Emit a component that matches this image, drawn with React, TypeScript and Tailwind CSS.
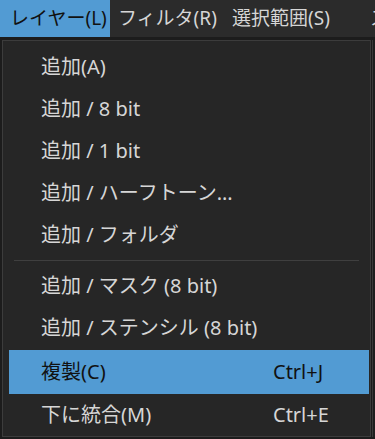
const font = { fontFamily: '"Noto Sans", "Noto Sans CJK JP", sans-serif' };

const groupA = ["追加(A)", "追加 / 8 bit", "追加 / 1 bit", "追加 / ハーフトーン...", "追加 / フォルダ"];
const groupB = ["追加 / マスク (8 bit)", "追加 / ステンシル (8 bit)"];

function Item({ label, shortcut, active }: { label: string; shortcut?: string; active?: boolean }) {
  return (
    <div
      className={
        active
          ? "ml-[6px] mr-[1px] flex h-[44px] items-center whitespace-nowrap bg-[#529bd3] pl-[32px] text-[#111111]"
          : "flex h-[42px] items-center whitespace-nowrap pl-[38px] text-[#d6d6d6]"
      }
    >
      <span className="w-[232px] shrink-0">{label}</span>
      {shortcut && <span>{shortcut}</span>}
    </div>
  );
}

export default function App() {
  return (
    <div className="relative h-[439px] w-[375px] overflow-hidden bg-[#1c1c1c] text-[20px] leading-none" style={font}>
      <div className="flex h-[37px] items-stretch overflow-hidden whitespace-nowrap bg-[#2b2b2b] text-[19px] text-[#d6d6d6]">
        <div className="flex w-[110px] shrink-0 items-center bg-[#529bd3] pl-[10px] text-[#111111]">レイヤー(L)</div>
        <div className="flex w-[122px] shrink-0 items-center pl-[8px]">フィルタ(R)</div>
        <div className="flex w-[138px] shrink-0 items-center">選択範囲(S)</div>
        <div className="flex shrink-0 items-center">ス</div>
      </div>
      <div className="flex">
        <div className="ml-[2px] mt-[3px] w-[369px] shrink-0 border border-[#3c3c3c] bg-[#262626] pt-[5px]">
          {groupA.map((t) => (
            <Item key={t} label={t} />
          ))}
          <div className="flex h-[9px] items-center px-[11px]">
            <div className="h-px w-full bg-[#3f3f3f]" />
          </div>
          {groupB.map((t) => (
            <Item key={t} label={t} />
          ))}
          <div className="h-px" />
          <Item label="複製(C)" shortcut="Ctrl+J" active />
          <Item label="下に統合(M)" shortcut="Ctrl+E" />
        </div>
        <div className="ml-[1px] mt-[3px] flex-1 border-l border-[#3a3a3a] bg-[#1f1f1f]" />
      </div>
    </div>
  );
}
